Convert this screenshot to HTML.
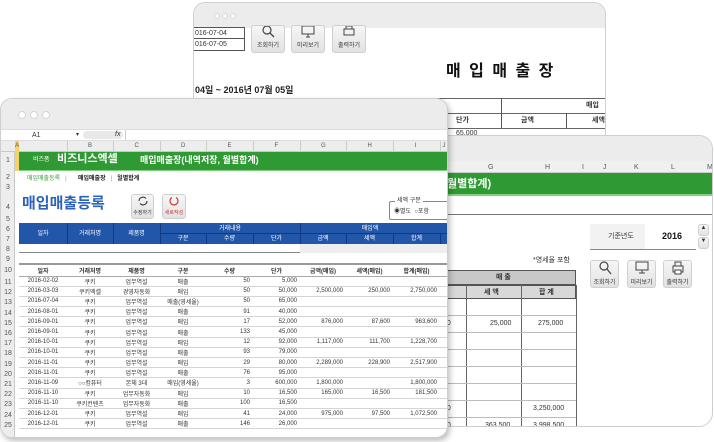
<!DOCTYPE html>
<html><head><meta charset="utf-8"><style>
*{margin:0;padding:0;box-sizing:border-box}
body{width:714px;height:442px;background:#fff;position:relative;overflow:hidden;font-family:"Liberation Sans","Noto Sans CJK KR",sans-serif;color:#333}
.a{position:absolute}
.win{position:absolute;background:#fff;border:1px solid #cfcfcf;border-radius:12px;overflow:hidden}
.tb{position:absolute;left:0;right:0;top:0;background:#ececec}
.dot{position:absolute;width:7px;height:7px;border-radius:50%;background:#fff;border:1px solid #d6d6d6}
.t{position:absolute;white-space:nowrap;font-size:7px;line-height:1}
.btn{position:absolute;background:linear-gradient(#f6f6f6,#e2e2e2);border:1px solid #d0d0d0;border-radius:3px;font-size:6px;text-align:center;color:#333}
table{border-collapse:collapse;position:absolute;table-layout:fixed}
td{font-size:6px;white-space:nowrap;overflow:hidden;padding:0 3px}
</style></head><body>

<!-- back window 1 -->
<div class="win" style="left:193px;top:2px;width:413px;height:150px">
 <div class="tb" style="height:25px"></div>
 <div class="dot" style="left:20px;top:10px;width:6px;height:6px"></div>
 <div class="dot" style="left:28px;top:10px;width:6px;height:6px"></div>
 <div class="dot" style="left:36px;top:10px;width:6px;height:6px"></div>
 <div class="a" style="left:-1px;top:24px;width:52px;height:24px;border:1px solid #555"></div>
 <div class="a" style="left:-1px;top:35px;width:52px;border-top:1px solid #555"></div>
 <div class="t" style="left:1px;top:27px;font-size:7px">016-07-04</div>
 <div class="t" style="left:1px;top:38px;font-size:7px">016-07-05</div>
 <div class="btn" style="left:57px;top:22px;width:34px;height:28px"><svg width="16" height="12" viewBox="0 0 16 12"><circle cx="7" cy="4" r="4" fill="none" stroke="#444" stroke-width="1.2"/><path d="M10 7l4 4" stroke="#444" stroke-width="1.3"/></svg><br>조회하기</div>
 <div class="btn" style="left:97px;top:22px;width:34px;height:28px"><svg width="16" height="12" viewBox="0 0 16 12"><rect x="2" y="0" width="12" height="8" fill="none" stroke="#444"/><path d="M6 11h4M8 8v3" stroke="#444"/></svg><br>미리보기</div>
 <div class="btn" style="left:138px;top:22px;width:34px;height:28px"><svg width="16" height="12" viewBox="0 0 16 12"><rect x="3" y="3" width="10" height="6" fill="none" stroke="#444"/><rect x="5" y="0" width="6" height="3" fill="none" stroke="#444"/></svg><br>출력하기</div>
 <div class="t" style="left:252px;top:61px;font-size:16px;font-weight:bold;color:#111;letter-spacing:2px">매 입 매 출 장</div>
 <div class="t" style="left:1px;top:83px;font-size:9px;font-weight:bold;color:#222">04일 ~ 2016년 07월 05일</div>
 <div class="a" style="left:0;top:95px;width:413px;border-top:1px solid #666"></div>
 <div class="a" style="left:0;top:110px;width:413px;border-top:1px solid #666"></div>
 <div class="a" style="left:0;top:125px;width:413px;border-top:1px solid #666"></div>
 <div class="a" style="left:307px;top:95px;height:30px;border-left:1px solid #555"></div>
 <div class="a" style="left:372px;top:110px;height:15px;border-left:1px solid #555"></div>
 <div class="t" style="left:392px;top:99px;font-size:7px;font-weight:bold">매입</div>
 <div class="t" style="left:262px;top:114px;font-size:7px;font-weight:bold">단가</div>
 <div class="t" style="left:327px;top:114px;font-size:7px;font-weight:bold">금액</div>
 <div class="t" style="left:398px;top:114px;font-size:7px;font-weight:bold">세액</div>
 <div class="t" style="left:262px;top:127px;font-size:7px">65,000</div>
</div>

<!-- right window -->
<div class="win" style="left:250px;top:135px;width:463px;height:292px;border-radius:14px">
 <div class="tb" style="height:25px"></div>
 <div class="a" style="left:0;top:25px;width:463px;height:12px;background:#f0f0f0;border-bottom:1px solid #ccc"></div>
 <div class="t" style="left:237px;top:28px;font-size:7px;color:#555">G</div>
 <div class="t" style="left:294px;top:28px;font-size:7px;color:#555">H</div>
 <div class="t" style="left:331px;top:28px;font-size:7px;color:#555">I</div>
 <div class="t" style="left:352px;top:28px;font-size:7px;color:#555">J</div>
 <div class="t" style="left:383px;top:28px;font-size:7px;color:#555">K</div>
 <div class="t" style="left:420px;top:28px;font-size:7px;color:#555">L</div>
 <div class="t" style="left:456px;top:28px;font-size:7px;color:#555">M</div>
 <div class="a" style="left:0;top:37px;width:463px;height:23px;background:#2f9a33;border-bottom:2px solid #7fd07f"></div>
 <div class="t" style="left:196px;top:43px;font-size:11px;font-weight:bold;color:#fff">월별합계)</div>
 <div class="a" style="left:0;top:78px;width:463px;border-top:1px solid #777"></div>
 <div class="a" style="left:339px;top:88px;width:106px;height:26px;background:#f2f2f2;border-bottom:1px solid #888"></div>
 <div class="a" style="left:394px;top:88px;width:51px;height:25px;background:#fff"></div>
 <div class="t" style="left:357px;top:97px;font-size:7px">기준년도</div>
 <div class="t" style="left:411px;top:96px;font-size:9px;font-weight:bold;color:#111">2016</div>
 <div class="btn" style="left:447px;top:88px;width:11px;height:12px;font-size:6px">▲</div>
 <div class="btn" style="left:447px;top:101px;width:11px;height:12px;font-size:6px">▼</div>
 <div class="btn" style="left:339px;top:124px;width:29px;height:28px"><svg width="16" height="14" viewBox="0 0 16 14"><circle cx="7" cy="5" r="4" fill="none" stroke="#444" stroke-width="1.2"/><path d="M10 8l4 5" stroke="#444" stroke-width="1.3"/></svg><br>조회하기</div>
 <div class="btn" style="left:376px;top:124px;width:29px;height:28px"><svg width="16" height="14" viewBox="0 0 16 14"><rect x="2" y="1" width="12" height="8" fill="none" stroke="#444"/><path d="M5 12h6M8 9v3" stroke="#444"/></svg><br>미리보기</div>
 <div class="btn" style="left:412px;top:124px;width:29px;height:28px"><svg width="16" height="14" viewBox="0 0 16 14"><rect x="3" y="5" width="10" height="6" fill="none" stroke="#444"/><rect x="5" y="1" width="6" height="4" fill="none" stroke="#444"/><rect x="5" y="9" width="6" height="4" fill="#fff" stroke="#444"/></svg><br>출력하기</div>
 <div class="t" style="left:282px;top:121px;font-size:7px">*영세율 포함</div>
 <div class="a" style="left:190px;top:134px;width:135px;height:15px;background:#c8c8c8;border:1px solid #555"></div>
 <div class="t" style="left:245px;top:138px;font-size:7px;font-weight:bold">매 출</div>
 <div class="a" style="left:190px;top:149px;width:135px;height:14px;background:#d8d8d8;border:1px solid #555"></div>
 <div class="a" style="left:215px;top:149px;height:143px;border-left:1px solid #666"></div>
 <div class="a" style="left:270px;top:149px;height:143px;border-left:1px solid #666"></div>
 <div class="a" style="left:325px;top:149px;height:143px;border-left:1px solid #666"></div>
 <div class="t" style="left:233px;top:153px;font-size:7px;font-weight:bold">세 액</div>
 <div class="t" style="left:288px;top:153px;font-size:7px;font-weight:bold">합 계</div>
 <div class="t" style="left:191px;top:153px;font-size:7px;font-weight:bold">액</div>
 <div class="a" style="left:190px;top:179px;width:135px;border-top:1px solid #bbb"></div>
 <div class="a" style="left:190px;top:196px;width:135px;border-top:1px solid #bbb"></div>
 <div class="a" style="left:190px;top:213px;width:135px;border-top:1px solid #bbb"></div>
 <div class="a" style="left:190px;top:230px;width:135px;border-top:1px solid #bbb"></div>
 <div class="a" style="left:190px;top:247px;width:135px;border-top:1px solid #bbb"></div>
 <div class="a" style="left:190px;top:264px;width:135px;border-top:1px solid #bbb"></div>
 <div class="a" style="left:190px;top:281px;width:135px;border-top:1px solid #bbb"></div>
 <div class="t" style="left:192px;top:184px;font-size:7px">00</div>
 <div class="t" style="left:239px;top:184px;font-size:7px">25,000</div>
 <div class="t" style="left:287px;top:184px;font-size:7px">275,000</div>
 <div class="t" style="left:192px;top:269px;font-size:7px">00</div>
 <div class="t" style="left:282px;top:269px;font-size:7px">3,250,000</div>
 <div class="t" style="left:192px;top:286px;font-size:7px">00</div>
 <div class="t" style="left:234px;top:286px;font-size:7px">363,500</div>
 <div class="t" style="left:282px;top:286px;font-size:7px">3,998,500</div>
</div>

<!-- front window -->
<div class="win" style="left:0;top:98px;width:448px;height:340px;border-radius:12px;box-shadow:2px 3px 6px rgba(0,0,0,.25)">
 <div class="tb" style="height:30px;background:#ececec"></div>
 <div class="dot" style="left:17px;top:12px;width:8px;height:8px"></div>
 <div class="dot" style="left:29px;top:12px;width:8px;height:8px"></div>
 <div class="dot" style="left:41px;top:12px;width:8px;height:8px"></div>
 <div class="a" style="left:0;top:30px;width:448px;height:12px;background:#fff;border-top:1px solid #ddd;border-bottom:1px solid #ddd"></div>
 <div class="t" style="left:31px;top:33px;font-size:7px">A1</div>
 <div class="t" style="left:75px;top:33px;font-size:6px">▾</div>
 <div class="a" style="left:82px;top:32px;width:40px;height:8px;border-radius:4px;background:#e8e8e8"></div>
 <div class="t" style="left:114px;top:32px;font-size:7px;font-style:italic">fx</div>
 <div class="a" style="left:124px;top:31px;height:10px;border-left:1px solid #ccc"></div>
 <div class="a" style="left:0;top:42px;width:448px;height:11px;background:#ededed;border-bottom:1px solid #c8c8c8"></div>
 <div class="a" style="left:14px;top:42px;width:4px;height:11px;background:#f3d36a"></div>
 <div class="a" style="left:0;top:53px;width:14px;height:287px;background:#ededed;border-right:1px solid #c8c8c8"></div>
 <div class="a" style="left:14px;top:53px;width:4px;height:19px;background:#f3d36a"></div>
 <div id="cols"></div>
 <div class="a" style="left:18px;top:53px;width:430px;height:19px;background:#2f9a33;border-bottom:1px solid #7fd07f"></div>
 <div class="t" style="left:32px;top:58px;font-size:6px;color:#fff">비즈폼</div>
 <div class="t" style="left:56px;top:55px;font-size:11px;font-weight:bold;color:#fff">비즈니스엑셀</div>
 <div class="t" style="left:139px;top:57px;font-size:9px;font-weight:bold;color:#fff">매입매출장(내역저장, 월별합계)</div>
 <div class="t" style="left:26px;top:77px;font-size:6px;color:#3a9a3a">매입매출등록 &nbsp;&nbsp;<span style="color:#999">|</span></div>
 <div class="t" style="left:77px;top:77px;font-size:6px;color:#222;font-weight:bold">매입매출장 &nbsp;&nbsp;<span style="color:#999;font-weight:normal">|</span> &nbsp;&nbsp;월별합계</div>
 <div class="t" style="left:21px;top:97px;font-size:15px;font-weight:bold;color:#2b63b8">매입매출등록</div>
 <div class="btn" style="left:130px;top:95px;width:23px;height:25px;font-size:5px"><svg width="12" height="12" viewBox="0 0 12 12"><path d="M2 6a4 4 0 0 1 7-2.5M10 6a4 4 0 0 1-7 2.5" fill="none" stroke="#333" stroke-width="1.1"/></svg><br>수정하기</div>
 <div class="btn" style="left:161px;top:95px;width:24px;height:25px;font-size:5px;color:#c33"><svg width="12" height="12" viewBox="0 0 12 12"><path d="M4 2.5a4 4 0 1 0 4 0" fill="none" stroke="#c33" stroke-width="1.1"/></svg><br>새로작성</div>
 <div class="a" style="left:388px;top:102px;width:60px;height:19px;border:1px solid #888;border-right:none;border-radius:2px"></div>
 <div class="t" style="left:394px;top:99px;font-size:6px;background:#fff;padding:0 2px">세액 구분</div>
 <div class="t" style="left:393px;top:110px;font-size:6px">◉별도 &nbsp;○포함</div>
 <div class="a" style="left:18px;top:124px;width:430px;height:21px;background:#2256a8"></div>
 <div id="blue"></div>
 <div class="a" style="left:18px;top:145px;width:430px;height:9px;border-bottom:1px solid #888"></div>
 <div class="a" style="left:299px;top:145px;width:149px;height:9px;background:#eee"></div>
 <div class="a" style="left:18px;top:164px;width:430px;border-top:2px solid #999"></div>
 <table id="data" style="left:18px;top:166px;width:430px"></table>
 <div id="rown"></div>
</div>

<script>
var X=[18,66,112,159,205,252,299,345,392,439,448];
var L="ABCDEFGHIJ";
var c=document.getElementById('cols'),h='';
h+='<div class="t" style="left:14px;top:44px;font-size:6px;color:#555">A</div>';
for(var i=1;i<10;i++){h+='<div class="a" style="left:'+X[i]+'px;top:42px;height:11px;border-left:1px solid #ccc"></div><div class="t" style="left:'+((X[i]+X[i+1])/2-2)+'px;top:44px;font-size:6px;color:#555">'+L[i]+'</div>';}
c.innerHTML=h;
var b='',bw='<div class="t" style="color:#fff;font-size:6px;';
[['일자',0],['거래처명',1],['제품명',2]].forEach(function(a){b+=bw+'left:'+X[a[1]]+'px;width:'+(X[a[1]+1]-X[a[1]])+'px;text-align:center;top:132px">'+a[0]+'</div>';});
for(var i=1;i<10;i++)b+='<div class="a" style="left:'+X[i]+'px;top:'+(i>3&&i!=6?135:124)+'px;height:'+(i>3&&i!=6?10:21)+'px;border-left:1px solid #0f3a80"></div>';
b+='<div class="a" style="left:159px;top:134px;width:289px;border-top:1px solid #0f3a80"></div>';
b+=bw+'left:159px;width:140px;text-align:center;top:127px">거래내용</div>';
b+=bw+'left:299px;width:140px;text-align:center;top:127px">매입액</div>';
['구분','수량','단가','금액','세액','합계'].forEach(function(s,k){b+=bw+'left:'+X[k+3]+'px;width:'+(X[k+4]-X[k+3])+'px;text-align:center;top:137px">'+s+'</div>';});
document.getElementById('blue').innerHTML=b;
var rows=[["2016-02-02","쿠키","업무역설","매출","50","5,000","","",""],
["2016-03-03","쿠키엑셀","경영자동화","매입","50","50,000","2,500,000","250,000","2,750,000"],
["2016-07-04","쿠키","업무역설","매출(영세율)","50","65,000","","",""],
["2016-08-01","쿠키","업무역설","매출","91","40,000","","",""],
["2016-09-01","쿠키","업무역설","매입","17","52,000","876,000","87,600","963,600"],
["2016-09-01","쿠키","업무역설","매출","133","45,000","","",""],
["2016-10-01","쿠키","업무역설","매입","12","92,000","1,117,000","111,700","1,228,700"],
["2016-10-01","쿠키","업무역설","매출","93","79,000","","",""],
["2016-11-01","쿠키","업무역설","매입","29","80,000","2,289,000","228,900","2,517,900"],
["2016-11-01","쿠키","업무역설","매출","76","95,000","","",""],
["2016-11-09","○○컴퓨터","본체 3대","매입(영세율)","3","600,000","1,800,000","","1,800,000"],
["2016-11-10","쿠키","업무자동화","매입","10","16,500","165,000","16,500","181,500"],
["2016-11-10","쿠키컨텐츠","업무자동화","매출","100","16,500","","",""],
["2016-12-01","쿠키","업무역설","매입","41","24,000","975,000","97,500","1,072,500"],
["2016-12-01","쿠키","업무역설","매출","146","26,000","","",""]];
var t='<colgroup>';for(var i=0;i<10;i++)t+='<col style="width:'+(X[i+1]-X[i])+'px">';t+='</colgroup>';
t+='<tr style="height:11px">';['일자','거래처명','제품명','구분','수량','단가','금액(매입)','세액(매입)','합계(매입)',''].forEach(function(s){t+='<td style="text-align:center;font-weight:bold;border-bottom:1px solid #aaa">'+s+'</td>';});t+='</tr>';
rows.forEach(function(r){t+='<tr style="height:10.2px">';r.forEach(function(s,k){t+='<td style="border-bottom:1px solid #d5d5d5;text-align:'+(k<4?'center':'right')+'">'+s+'</td>';});t+='<td style="border-bottom:1px solid #d5d5d5"></td></tr>';});
document.getElementById('data').innerHTML=t;
var n='',ys=[58,75,85,105,117,127,137,147,157,168];
for(var i=0;i<10;i++)n+='<div class="t" style="left:0;width:14px;text-align:center;top:'+ys[i]+'px;font-size:7px;color:#555">'+(i+1)+'</div>';
for(var i=0;i<15;i++)n+='<div class="t" style="left:0;width:14px;text-align:center;top:'+(180+i*10.2)+'px;font-size:7px;color:#555">'+(i+11)+'</div>';
document.getElementById('rown').innerHTML=n;
</script>
</body></html>
